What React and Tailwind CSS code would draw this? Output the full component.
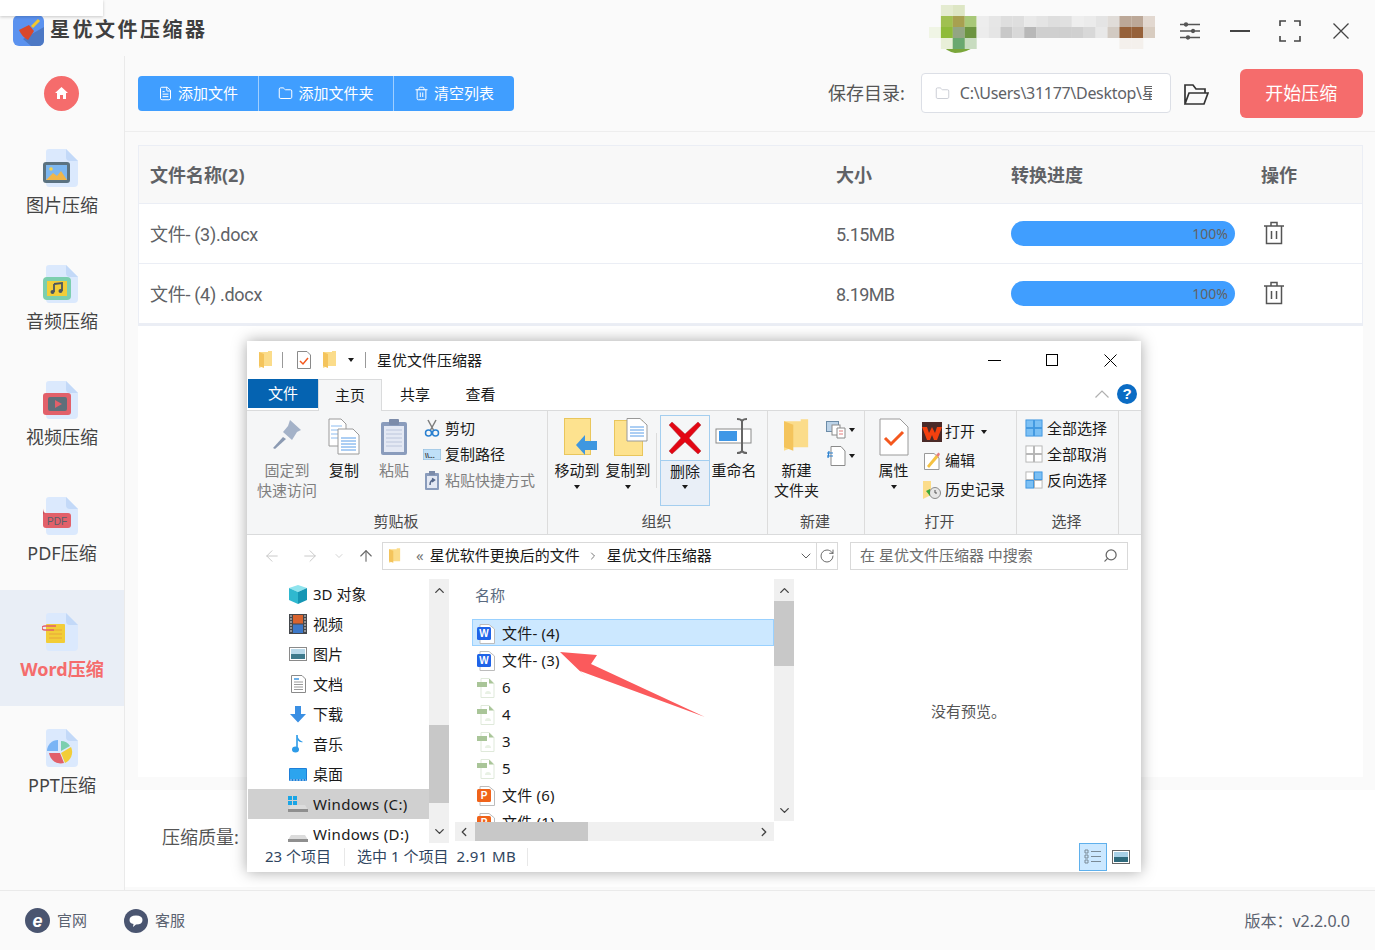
import { FileText, Folder, Trash2, ChevronLeft, ChevronRight, ChevronUp, ChevronDown, ArrowLeft, ArrowRight, ArrowUp, RotateCw, Search } from 'lucide-react'

const MOSAIC = [
  [null, '#e4ebd0', '#dde6c4', null, null, null, null, null, null, null, null, null, null, null, null, null, null, null, null, null],
  [null, '#a0c050', '#a8a050', '#a8c878', '#ededed', '#e6e6e6', '#dedede', '#dedede', '#e9e9e9', '#e4e4e4', '#dedede', '#e0e0e0', '#eeeeee', '#ebebeb', '#e4e4e4', '#e0dcd8', '#bca898', '#bca898', '#e2d8d0', null],
  ['#f0f5e5', '#8fbb3a', '#93a583', '#6c9440', '#ececec', '#e5e5e5', '#c8c8c8', '#d8d8d8', '#b8b8b8', '#cfcfcf', '#cfcfcf', '#cfcfcf', '#d0d0d0', '#d8d8d8', '#e8e8e8', '#d2cac2', '#96613a', '#96613a', '#d8ccc0', null],
  [null, '#e8efd8', '#6aa870', '#c8dcc0', null, null, null, null, null, null, null, null, null, null, null, null, '#f4f0ec', '#f4f0ec', null, null],
]

const NAV = [
  { label: '图片压缩', art: 'image' },
  { label: '音频压缩', art: 'audio' },
  { label: '视频压缩', art: 'video' },
  { label: 'PDF压缩', art: 'pdf' },
  { label: 'Word压缩', art: 'word', active: true },
  { label: 'PPT压缩', art: 'ppt' },
]

const TREE = [
  { label: '3D 对象', icon: 'cube' },
  { label: '视频', icon: 'film' },
  { label: '图片', icon: 'pic' },
  { label: '文档', icon: 'doc' },
  { label: '下载', icon: 'down' },
  { label: '音乐', icon: 'note' },
  { label: '桌面', icon: 'desk' },
  { label: 'Windows (C:)', icon: 'c', active: true, wide: true },
  { label: 'Windows (D:)', icon: 'd', wide: true },
]

const FILES = [
  { name: '文件- (4)', type: 'w', active: true },
  { name: '文件- (3)', type: 'w' },
  { name: '6', type: 'g' },
  { name: '4', type: 'g' },
  { name: '3', type: 'g' },
  { name: '5', type: 'g' },
  { name: '文件 (6)', type: 'p' },
  { name: '文件 (1)', type: 'p' },
]

function Logo() {
  return (
    <svg width="31" height="31" viewBox="0 0 31 31">
      <rect width="31" height="31" rx="6" fill="#5b92ef" />
      <path d="M31 12 L31 25 Q31 31 25 31 L18 31 L10 24 Z" fill="#4c78c4" />
      <path d="M19 12 L26 5" stroke="#f3c72e" strokeWidth="3" />
      <path d="M6 15 L16 10 L21 16 L15 25 Q9 22 6 15 Z" fill="#d9482b" />
    </svg>
  )
}

function Mosaic() {
  return (
    <svg width="226" height="48" viewBox="0 0 226 48">
      <path d="M12 33 L47 33 L47 40 Q38 48 26 48 Q16 46 12 38 Z" fill="#7aa63a" />
      {MOSAIC.map((row, r) =>
        row.map((c, i) => c && <rect key={`${r}-${i}`} x={i * 11.9} y={r * 11} width="12" height="11" fill={c} />)
      )}
    </svg>
  )
}

function NavArt({ art }) {
  return (
    <svg width="40" height="38" viewBox="0 0 40 38">
      <path d="M7 0 H24 L36 12 V34 Q36 38 32 38 H7 Q4 38 4 34 V3 Q4 0 7 0 Z" fill="#dbe9fd" />
      <path d="M24 0 L36 12 H28 Q24 12 24 8 Z" fill="#c3d9f8" />
      {art === 'image' && (
        <g>
          <rect x="1" y="13" width="27" height="21" rx="3" fill="#5b7280" />
          <rect x="4" y="16" width="21" height="15" fill="#7db7f0" />
          <path d="M4 31 L11 24 L15 27 L19 22 L25 31 Z" fill="#f0b64a" />
          <circle cx="9" cy="20" r="1.8" fill="#f7d34a" />
        </g>
      )}
      {art === 'audio' && (
        <g>
          <rect x="1" y="12" width="28" height="23" rx="4" fill="#7ccfae" />
          <rect x="5" y="16" width="20" height="15" fill="#f2cd38" />
          <path d="M12 19 L20 18 V26 M12 19 V27" stroke="#4a5660" strokeWidth="1.8" fill="none" />
          <circle cx="10.5" cy="27" r="2" fill="#4a5660" />
          <circle cx="18.5" cy="26" r="2" fill="#4a5660" />
        </g>
      )}
      {art === 'video' && (
        <g>
          <rect x="1" y="12" width="28" height="22" rx="3" fill="#e2606a" />
          <rect x="6" y="16" width="19" height="14" rx="2" fill="#5f6f7a" />
          <path d="M13 19 L20 23 L13 27 Z" fill="#e2606a" />
        </g>
      )}
      {art === 'pdf' && (
        <g>
          <path d="M1 11 Q1 16 4 16 V27 L1 25 Z" fill="#c94f5c" />
          <rect x="1" y="16" width="28" height="15" rx="3" fill="#e2606a" />
          <text x="15" y="27.5" textAnchor="middle" fontSize="10" fontWeight="500" fill="#5a5f6a" fontFamily="Liberation Sans, sans-serif">PDF</text>
        </g>
      )}
      {art === 'word' && (
        <g>
          <rect x="4" y="11" width="19" height="19" rx="1" fill="#f2cd38" />
          <path d="M7 17 H20 M7 21 H20 M7 25 H20" stroke="#e8a53a" strokeWidth="1" />
          <path d="M14 13 H3 Q0 13 0 15 Q0 17 3 17 H12" stroke="#e2606a" strokeWidth="1.3" fill="none" />
        </g>
      )}
      {art === 'ppt' && (
        <g>
          <path d="M17 12 V23 H6 A11 11 0 0 1 17 12" fill="#7ab4f5" transform="translate(-1 -1)" />
          <path d="M19 12 A11 11 0 0 1 28 17 L19 22 Z" fill="#7ccfae" />
          <path d="M29 18 A12 12 0 0 1 23 34 L19 24 Z" fill="#f2cd38" />
          <path d="M7 24 H18 L22 34 A12 12 0 0 1 7 24 Z" fill="#e2606a" />
        </g>
      )}
    </svg>
  )
}

function TrashIcon() {
  return (
    <svg width="22" height="24" viewBox="0 0 22 24" fill="none" stroke="#555" strokeWidth="1.5">
      <path d="M1 5 H21 M8 5 V1.500 H14 V5 M3.500 5 V22.500 H18.500 V5 M8.500 10 V18 M13.500 10 V18" />
    </svg>
  )
}

function ProgressRow({ name, size }) {
  return (
    <div className="flex h-[60px] items-center border-b border-[#ebeef5] pl-[11px] text-[18px] text-[#606266]">
      <div className="w-[686px] pt-[2px] font-['Roboto','Noto_Sans_CJK_SC',sans-serif] tracking-[-0.3px]">{name}</div>
      <div className="w-[175px] pt-[2px] font-['Roboto',sans-serif] tracking-[-0.6px]">{size}</div>
      <div className="w-[250px]">
        <div className="-mt-[1px] flex h-[25px] w-[224px] items-center justify-end rounded-full bg-[#409eff] pr-[7px] text-[14px]">100%</div>
      </div>
      <div className="-mt-[2px] ml-[2px]"><TrashIcon /></div>
    </div>
  )
}

function Yfolder({ w = 14, h = 18 }) {
  return (
    <svg width={w} height={h} viewBox="0 0 14 18">
      <path d="M0 1 L9 1 L9 0 L13 0 V15 H5 L0 17 Z" fill="#fbdc8a" />
      <path d="M0 1 L5 3 V17 L0 15 Z" fill="#f4c45c" />
    </svg>
  )
}

const BIG_ICONS = {
  pin: (
    <svg width="34" height="34" viewBox="0 0 34 34">
      <path d="M20 2 L31 12 L27 14 L22 22 L13 14 L18 8 Z" fill="#a4b2c8" />
      <path d="M13 19 L3 30 L5 31 L16 21 Z" fill="#8b9ab2" />
    </svg>
  ),
  copy: (
    <svg width="32" height="38" viewBox="0 0 32 38" fill="#fff" stroke="#9a9a9a">
      <path d="M1 1 H13 L18 6 V28 H1 Z" />
      <path d="M3 8 H14 M3 12 H14 M3 16 H14 M3 20 H10" stroke="#8dbcf0" />
      <path d="M10 11 H25 L31 17 V36 H10 Z" />
      <path d="M13 20 H28 M13 23 H28 M13 26 H28 M13 29 H28 M13 32 H28" stroke="#5b9ee8" />
    </svg>
  ),
  paste: (
    <svg width="28" height="38" viewBox="0 0 28 38">
      <rect x="1" y="4" width="26" height="33" rx="2" fill="#8a9cbc" />
      <rect x="4" y="8" width="20" height="26" fill="#e4e9f4" />
      <path d="M6 12 H22 M6 16 H22 M6 20 H22 M6 24 H22 M6 28 H22" stroke="#bcc6dc" />
      <rect x="9" y="1" width="10" height="6" rx="1" fill="#7c8caa" />
    </svg>
  ),
  move: (
    <svg className="ml-[6px]" width="33" height="38" viewBox="0 0 33 38">
      <rect x=".5" y=".5" width="26" height="36" fill="#fde28f" stroke="#e9c65c" />
      <path d="M12 27 L21 17 V23 H33 V32 H21 V37 Z" fill="#3f97e0" />
    </svg>
  ),
  copyto: (
    <svg className="ml-[5px]" width="34" height="38" viewBox="0 0 34 38">
      <rect x=".5" y="2.500" width="28" height="35" fill="#fde28f" stroke="#e9c65c" />
      <path d="M13 .5 H26 L33 7 V23 H13 Z" fill="#fff" stroke="#999" />
      <path d="M16 9 H30 M16 12 H30 M16 15 H30 M16 18 H30" stroke="#5b9ee8" />
    </svg>
  ),
  del: (
    <svg width="34" height="34" viewBox="0 0 34 34">
      <path d="M4 1 L17 13 L30 1 L33 4 L21 17 L33 30 L30 33 L17 21 L4 33 L1 30 L13 17 L1 4 Z" fill="#e30613" stroke="#a8323a" strokeWidth="0.5" />
    </svg>
  ),
  rename: (
    <svg width="38" height="36" viewBox="0 0 38 36" fill="none">
      <rect x="1" y="11" width="35" height="14" fill="#fff" stroke="#8a8a8a" />
      <rect x="4" y="13" width="18" height="10" fill="#3f97e6" />
      <path d="M22 1 Q26 1 27 3 Q28 1 32 1 M27 3 V33 M22 35 Q26 35 27 33 Q28 35 32 35" stroke="#666" strokeWidth="2" />
    </svg>
  ),
  newdir: <Yfolder w={26} h={36} />,
  prop: (
    <svg width="30" height="38" viewBox="0 0 30 38">
      <path d="M1 1 H21 L29 9 V37 H1 Z" fill="#fff" stroke="#9a9a9a" />
      <path d="M6 20 L12 26 L24 14" stroke="#f4581e" strokeWidth="3" fill="none" />
    </svg>
  ),
}

function BigBtn({ w, icon, label, second, caret, dim, ml = 0 }) {
  return (
    <div
      className={`relative flex flex-col items-center ${dim ? 'text-[#7f7f7f]' : 'text-[#1a1a1a]'}`}
      style={{ width: w, marginLeft: ml }}
    >
      <div className="mt-[7px] flex h-[42px] items-start justify-center">{BIG_ICONS[icon]}</div>
      <div className="h-[20px] leading-[20px] whitespace-nowrap">{label}</div>
      {second && <div className="h-[20px] leading-[20px] whitespace-nowrap">{second}</div>}
      {caret && <div className="mt-[5px] h-0 w-0 border-x-[3.500px] border-t-[4px] border-x-transparent border-t-[#1a1a1a]" />}
    </div>
  )
}

function DeleteBtn() {
  return (
    <div className="mt-[4px] flex h-[91px] w-[50px] flex-col items-center border border-[#a4ceef] bg-[#e9eff7] text-[#1a1a1a]">
      <div className="flex h-[45px] w-full items-center justify-center border-b border-[#a4ceef] bg-[#f5f6f7]">{BIG_ICONS.del}</div>
      <div className="h-[20px] leading-[20px]">删除</div>
      <div className="mt-[4px] h-0 w-0 border-x-[3.500px] border-t-[4px] border-x-transparent border-t-[#1a1a1a]" />
    </div>
  )
}

function SmallRow({ icon, label, h = 26, dim, caret }) {
  return (
    <div className={`flex items-center gap-[3px] ${dim ? 'text-[#7f7f7f]' : 'text-[#1a1a1a]'}`} style={{ height: h }}>
      <div className="flex w-[20px] justify-center">{icon}</div>
      <span className="whitespace-nowrap">{label}</span>
      {caret && <div className="ml-[3px] h-0 w-0 border-x-[3.500px] border-t-[4px] border-x-transparent border-t-[#1a1a1a]" />}
    </div>
  )
}

function Group({ w, label, children }) {
  return (
    <div className="relative flex flex-col border-r border-[#dcdcdc]" style={{ width: w }}>
      <div className="flex h-[99px]">{children}</div>
      <div className="mt-[1px] pr-[2px] text-center leading-[20px] text-[#4a4a4a]">{label}</div>
    </div>
  )
}

function Grid4({ on = [0, 1, 2, 3] }) {
  const cells = [[1, 1], [10, 1], [1, 10], [10, 10]]
  return (
    <svg width="18" height="18" viewBox="0 0 19 19">
      {cells.map(([x, y], i) =>
        on.includes(i)
          ? <rect key={i} x={x} y={y} width="8" height="8" fill="#7cc0f4" stroke="#3f97e0" />
          : <rect key={i} x={x} y={y} width="8" height="8" fill="#fff" stroke="#b5b5b5" />
      )}
    </svg>
  )
}

function TreeIcon({ type }) {
  if (type === 'cube') return (
    <svg width="20" height="19" viewBox="0 0 20 19">
      <path d="M10 0 L19 3 L10 7 L1 3 Z" fill="#8fe4ee" />
      <path d="M1 3 L10 7 V19 L1 15 Z" fill="#2fb8cf" />
      <path d="M19 3 L10 7 V19 L19 15 Z" fill="#1596b4" />
    </svg>
  )
  if (type === 'film') return (
    <svg width="18" height="20" viewBox="0 0 18 20">
      <rect width="18" height="20" fill="#44474c" />
      <rect x="4" y="1" width="10" height="8.500" fill="#d8632e" />
      <rect x="4" y="10.500" width="10" height="8.500" fill="#3c78c8" />
      <path d="M1 2 H3 M1 5 H3 M1 8 H3 M1 11 H3 M1 14 H3 M1 17 H3 M15 2 H17 M15 5 H17 M15 8 H17 M15 11 H17 M15 14 H17 M15 17 H17" stroke="#dedede" />
    </svg>
  )
  if (type === 'pic') return (
    <svg width="18" height="14" viewBox="0 0 18 14">
      <rect x="0.500" y="0.500" width="17" height="13" fill="#fff" stroke="#8a8a8a" />
      <rect x="2" y="2" width="14" height="5" fill="#b9d9ea" />
      <rect x="2" y="7" width="14" height="5" fill="#3e7a8c" />
    </svg>
  )
  if (type === 'doc') return (
    <svg width="15" height="18" viewBox="0 0 15 18" fill="none">
      <path d="M.5 .5 H11 L14.500 4 V17.500 H.5 Z" fill="#fff" stroke="#8a8a8a" />
      <path d="M3 4 H8" stroke="#3f97e0" strokeWidth="1.500" />
      <path d="M3 7 H12 M3 9.500 H12 M3 12 H12 M3 14.500 H12" stroke="#9a9a9a" />
    </svg>
  )
  if (type === 'down') return (
    <svg width="18" height="17" viewBox="0 0 18 17">
      <path d="M6 0 H12 V8 H17 L9 16.500 L1 8 H6 Z" fill="#3a8fe3" />
    </svg>
  )
  if (type === 'note') return (
    <svg width="12" height="20" viewBox="0 0 12 20">
      <path d="M5 1 V15" stroke="#2d9be8" strokeWidth="1.600" />
      <ellipse cx="3.500" cy="15.500" rx="3.500" ry="3" fill="#2d9be8" />
      <path d="M5 1 Q6 6 11 8 Q8 9 5.500 6 Z" fill="#2d9be8" />
    </svg>
  )
  if (type === 'desk') return (
    <svg width="18" height="13" viewBox="0 0 18 13">
      <rect width="18" height="13" rx="1" fill="#1e7fd8" />
      <rect x="1" y="1" width="16" height="10" fill="#2ca4ee" />
      <path d="M1 12 H17" stroke="#bfe0f6" strokeDasharray="2 1" />
    </svg>
  )
  return (
    <svg width="20" height="16" viewBox="0 0 20 16">
      <path d="M3 9 L17 9 L20 14 H0 Z" fill="#dcdcdc" />
      <rect x="0" y="13" width="20" height="3" fill="#8f8f8f" />
      {type === 'c' && (
        <g fill="#19a5e6">
          <rect x="0" y="0" width="4" height="4" />
          <rect x="5" y="0" width="4" height="4" />
          <rect x="0" y="5" width="4" height="4" />
          <rect x="5" y="5" width="4" height="4" />
        </g>
      )}
    </svg>
  )
}

function FileIcon({ type }) {
  if (type === 'g') return (
    <svg width="18" height="20" viewBox="0 0 18 20">
      <path d="M4 .5 H12 L17 5.500 V19.500 H4 Z" fill="#fff" stroke="#dfe9da" />
      <path d="M12 .5 L17 5.500 H12 Z" fill="#a9c598" />
      <rect x="0" y="4" width="10" height="5" fill="#a9c598" />
      <path d="M8 16 Q8 13 11 13 Q14 13 14 16 Z" fill="#e8f1e4" />
    </svg>
  )
  const color = type === 'w' ? '#1f63e8' : '#f0631a'
  return (
    <svg width="18" height="20" viewBox="0 0 18 20">
      <path d="M3 .5 H12 L17.500 5 V19.500 H3 Z" fill="#fff" stroke="#bcbcbc" />
      <rect x="0" y="3" width="14" height="13" rx="1.500" fill={color} />
      <text x="7" y="13" textAnchor="middle" fontSize="10" fontWeight="700" fill="#fff" fontFamily="Liberation Sans, sans-serif">{type === 'w' ? 'W' : 'P'}</text>
    </svg>
  )
}

function Explorer() {
  return (
    <div className="absolute left-[247px] top-[341px] flex h-[531px] w-[894px] flex-col bg-white font-['Noto_Sans','Noto_Sans_CJK_SC',sans-serif] text-[15px] text-[#1a1a1a] shadow-[0_0_14px_rgba(0,0,0,0.35)]">
      {/* title */}
      <div className="flex h-[38px] shrink-0 items-center pl-[12px]">
        <Yfolder />
        <div className="ml-[9px] h-[16px] w-px bg-[#999]" />
        <svg className="ml-[14px]" width="14" height="18" viewBox="0 0 14 18">
          <path d="M.5 .5 H10 L13.500 4 V17.500 H.5 Z" fill="#fff" stroke="#8a8a8a" />
          <path d="M3 10 L6 13 L11 7" stroke="#f4581e" strokeWidth="1.500" fill="none" />
        </svg>
        <div className="ml-[12px]"><Yfolder /></div>
        <div className="ml-[11px] h-0 w-0 border-x-[3.500px] border-t-[4px] border-x-transparent border-t-[#1a1a1a]" />
        <div className="ml-[11px] h-[16px] w-px bg-[#999]" />
        <span className="ml-[11px]">星优文件压缩器</span>
        <div className="ml-auto flex items-center">
          <div className="h-px w-[13px] bg-black" />
          <div className="ml-[45px] h-[12px] w-[12px] border border-black" />
          <svg className="ml-[46px] mr-[24px]" width="13" height="13" viewBox="0 0 13 13" stroke="#000" strokeWidth="1">
            <path d="M.5 .5 L12.500 12.500 M12.500 .5 L.5 12.500" />
          </svg>
        </div>
      </div>
      {/* tabs */}
      <div className="relative flex h-[32px] shrink-0 border-b border-[#dadbdc]">
        <div className="ml-px flex h-[29px] w-[70px] items-center justify-center bg-[#0563b1] text-white">文件</div>
        <div className="-mb-px flex h-[32px] w-[64px] items-center justify-center border-x border-t border-[#dadbdc] bg-[#f5f6f7]">主页</div>
        <div className="flex h-[31px] w-[66px] items-center justify-center">共享</div>
        <div className="flex h-[31px] w-[65px] items-center justify-center">查看</div>
        <div className="ml-auto mr-[4px] flex items-center gap-[8px] pb-[1px]">
          <svg width="14" height="8" viewBox="0 0 14 8" fill="none" stroke="#b0b0b0" strokeWidth="1.200">
            <path d="M.5 7.500 L7 1 L13.500 7.500" />
          </svg>
          <div className="flex h-[20px] w-[20px] items-center justify-center rounded-full bg-[#0b6cc4] font-['Liberation_Sans',sans-serif] text-[15px] font-bold text-white">?</div>
        </div>
      </div>
      {/* ribbon */}
      <div className="flex h-[124px] shrink-0 border-b border-[#dadbdc] bg-[#f5f6f7]">
        <Group w={301} label="剪贴板">
          <BigBtn w={64} ml={8} icon="pin" label="固定到" second="快速访问" dim />
          <BigBtn w={50} icon="copy" label="复制" />
          <BigBtn w={50} icon="paste" label="粘贴" dim />
          <div className="ml-[3px] pt-[4px]">
            <SmallRow
              label="剪切"
              icon={
                <svg width="16" height="18" viewBox="0 0 16 18" fill="none">
                  <path d="M4 1 L10 12 M12 1 L6 12" stroke="#7d7d7d" strokeWidth="1.500" />
                  <circle cx="4.500" cy="14" r="3" stroke="#2a80d0" strokeWidth="1.500" />
                  <circle cx="11.500" cy="14" r="3" stroke="#2a80d0" strokeWidth="1.500" />
                </svg>
              }
            />
            <SmallRow
              label="复制路径"
              icon={
                <svg width="18" height="11" viewBox="0 0 18 11">
                  <rect width="18" height="11" fill="#bfe0f8" stroke="#8fb8d8" />
                  <text x="2" y="8.500" fontSize="7" fontWeight="700" fill="#333" fontFamily="Liberation Sans, sans-serif">\\...</text>
                </svg>
              }
            />
            <SmallRow
              label="粘贴快捷方式"
              dim
              icon={
                <svg width="14" height="19" viewBox="0 0 14 19">
                  <rect y="2" width="14" height="17" rx="1" fill="#8a9cbc" />
                  <rect x="2" y="5" width="10" height="12" fill="#e4e9f4" />
                  <rect x="4" y="0" width="6" height="4" fill="#7c8caa" />
                  <path d="M5 14 Q5 9 9 9 M7 7.500 L9.500 9 L7 11" stroke="#56698c" strokeWidth="1.500" fill="none" />
                </svg>
              }
            />
          </div>
        </Group>
        <Group w={220} label="组织">
          <BigBtn w={50} ml={4} icon="move" label="移动到" caret />
          <BigBtn w={50} ml={1} icon="copyto" label="复制到" caret />
          <div className="ml-[3px] mr-[3px] mt-[22px] h-[55px] w-px bg-[#dcdcdc]" />
          <DeleteBtn />
          <BigBtn w={48} icon="rename" label="重命名" />
        </Group>
        <Group w={97} label="新建">
          <BigBtn w={57} icon="newdir" label="新建" second="文件夹" />
          <div className="ml-px pt-[6px]">
            <div className="flex h-[26px] items-center gap-[3px]">
              <svg width="20" height="18" viewBox="0 0 20 18">
                <rect x=".5" y=".5" width="12" height="10" fill="#bcd3e8" stroke="#6c8ca8" />
                <rect x="6" y="4" width="8" height="10" fill="#fff" stroke="#8a8a8a" />
                <path d="M11 7 H19 V17 H11 Z" fill="#fff" stroke="#8a8a8a" />
                <path d="M13 10 H17 M13 13 H17" stroke="#e27a7a" />
              </svg>
              <div className="h-0 w-0 border-x-[3.500px] border-t-[4px] border-x-transparent border-t-[#1a1a1a]" />
            </div>
            <div className="flex h-[26px] items-center gap-[3px]">
              <svg width="20" height="20" viewBox="0 0 20 20">
                <path d="M5 .5 H15 L19 5 V19.500 H5 Z" fill="#fff" stroke="#8a8a8a" />
                <path d="M1 7 H7 M1 10 H7 M3 5 L2 12" stroke="#2a80d0" strokeWidth="1.200" />
              </svg>
              <div className="h-0 w-0 border-x-[3.500px] border-t-[4px] border-x-transparent border-t-[#1a1a1a]" />
            </div>
          </div>
        </Group>
        <Group w={152} label="打开">
          <BigBtn w={57} icon="prop" label="属性" caret />
          <div className="pt-[6px]">
            <SmallRow
              h={29}
              label="打开"
              caret
              icon={
                <svg width="20" height="20" viewBox="0 0 20 20">
                  <rect width="20" height="20" fill="#4a2a28" />
                  <path d="M0 5 H5 L7 11 L10 5 L13 11 L15 5 H20 L15 18 H12 L10 13 L8 18 H5 Z" fill="#f4400f" />
                </svg>
              }
            />
            <SmallRow
              h={29}
              label="编辑"
              icon={
                <svg width="16" height="18" viewBox="0 0 16 18">
                  <path d="M.5 1.500 H10 L15 6 V17.500 H.5 Z" fill="#fff" stroke="#9a9a9a" />
                  <path d="M3 14 L12 3 L14.500 5 L5 16 Z" fill="#f5c242" />
                  <path d="M12 3 L14.500 0.500 L16 2 L14.500 5 Z" fill="#e87a7a" />
                </svg>
              }
            />
            <SmallRow
              h={29}
              label="历史记录"
              icon={
                <svg width="18" height="18" viewBox="0 0 18 18">
                  <path d="M0 0 H8 V14 L0 18 Z" fill="#fbdc8a" />
                  <circle cx="12" cy="12" r="5.500" fill="#e6e6e6" stroke="#8a8a8a" />
                  <path d="M12 9 V12 H14" stroke="#555" fill="none" />
                  <path d="M3 10 L7 8 V15 Z" fill="#3aa83a" />
                </svg>
              }
            />
          </div>
        </Group>
        <Group w={102} label="选择">
          <div className="ml-[7px] pt-[4px]">
            <SmallRow label="全部选择" icon={<Grid4 />} />
            <SmallRow label="全部取消" icon={<Grid4 on={[]} />} />
            <SmallRow label="反向选择" icon={<Grid4 on={[1, 2]} />} />
          </div>
        </Group>
      </div>
      {/* address */}
      <div className="flex h-[44px] shrink-0 items-center pb-[3px]">
        <ArrowLeft className="ml-[16px]" size={18} strokeWidth={1.2} color="#c4c4c4" />
        <ArrowRight className="ml-[20px]" size={18} strokeWidth={1.2} color="#c4c4c4" />
        <ChevronDown className="ml-[14px]" size={12} strokeWidth={1.5} color="#c4c4c4" />
        <ArrowUp className="ml-[12px]" size={18} strokeWidth={1.5} color="#6a6a6a" />
        <div className="ml-[7px] flex h-[28px] w-[456px] items-center border border-[#d9d9d9]">
          <div className="ml-[6px]"><Yfolder w={12} h={16} /></div>
          <span className="ml-[15px] text-[#777]">«</span>
          <span className="ml-[6px]">星优软件更换后的文件</span>
          <ChevronRight className="ml-[7px]" size={12} strokeWidth={1.6} color="#555" />
          <span className="ml-[8px]">星优文件压缩器</span>
          <ChevronDown className="ml-auto" size={16} strokeWidth={1.3} color="#444" />
          <div className="ml-[2px] h-[26px] w-px bg-[#d9d9d9]" />
          <RotateCw className="mx-[2px]" size={16} strokeWidth={1.3} color="#555" />
        </div>
        <div className="ml-[12px] flex h-[28px] w-[278px] items-center justify-between border border-[#d9d9d9] px-[9px] text-[#6d6d6d]">
          <span>在 星优文件压缩器 中搜索</span>
          <Search size={15} strokeWidth={2} color="#666" className="-scale-x-100" />
        </div>
      </div>
      {/* content */}
      <div className="relative flex h-[264px] shrink-0">
        <div className="flex w-[182px] flex-col overflow-hidden pl-px">
          {TREE.map((t) => (
            <div key={t.label} className={`flex h-[30px] shrink-0 items-center ${t.active ? 'bg-[#d0d0d0]' : ''}`}>
              <div className="ml-[39px] flex w-[22px] justify-center"><TreeIcon type={t.icon} /></div>
              <span className={`ml-[4px] ${t.wide ? 'tracking-[0.35px]' : ''}`}>{t.label}</span>
            </div>
          ))}
        </div>
        <div className="flex w-[20px] flex-col items-center bg-[#f0f0f0] pt-[4px]">
          <ChevronUp size={15} strokeWidth={2.2} color="#444" />
          <div className="mt-[127px] h-[78px] w-full bg-[#c8c8c8]" />
          <ChevronDown className="mt-[21px]" size={15} strokeWidth={2.2} color="#444" />
        </div>
        <div className="relative ml-[6px] flex w-[319px] flex-col">
          <div className="h-[40px] pl-[20px] pt-[5px] text-[#5a6a80]">名称</div>
          <div className="flex h-[203px] flex-col overflow-hidden pl-[17px]">
            {FILES.map((f) => (
              <div key={f.name} className={`flex h-[27px] shrink-0 items-center border pl-[4px] pt-[2px] ${f.active ? 'border-[#99d1ff] bg-[#cce8ff]' : 'border-transparent'}`}>
                <FileIcon type={f.type} />
                <span className="ml-[7px] tracking-[0.2px]">{f.name}</span>
              </div>
            ))}
          </div>
          <div className="flex h-[19px] items-center bg-[#f0f0f0]">
            <ChevronLeft size={14} strokeWidth={2.2} color="#444" className="ml-[2px]" />
            <div className="ml-[4px] h-full w-[113px] bg-[#c8c8c8]" />
            <ChevronRight size={14} strokeWidth={2.2} color="#444" className="ml-auto mr-[3px]" />
          </div>
        </div>
        <div className="flex h-[242px] w-[20px] flex-col items-center bg-[#f0f0f0] pt-[4px]">
          <ChevronUp size={15} strokeWidth={2.2} color="#444" />
          <div className="mt-[3px] h-[65px] w-full bg-[#c8c8c8]" />
          <ChevronDown className="mt-[137px]" size={15} strokeWidth={2.2} color="#444" />
        </div>
        <div className="flex flex-1 items-center justify-center pl-[2px] text-[15px] text-[#555]">没有预览。</div>
      </div>
      {/* status */}
      <div className="flex min-h-0 flex-1 items-center pb-[2px] text-[15px] text-[#2f4560]">
        <span className="ml-[18px]">23 个项目</span>
        <div className="ml-[13px] h-[18px] w-px bg-[#e8e8e8]" />
        <span className="ml-[12px]">选中 1 个项目</span>
        <span className="ml-[8px] tracking-[0.4px]">2.91 MB</span>
        <div className="ml-[11px] h-[18px] w-px bg-[#e8e8e8]" />
        <div className="ml-auto flex h-[28px] w-[28px] items-center justify-center border border-[#5fb0ec] bg-[#cce8ff]">
          <svg width="18" height="16" viewBox="0 0 18 16" fill="none" stroke="#7a8a96">
            <path d="M1 1 H4 V4 H1 Z M1 6 H4 V9 H1 Z M1 11 H4 V14 H1 Z M7 2.500 H17 M7 7.500 H17 M7 12.500 H17" />
          </svg>
        </div>
        <div className="ml-[5px] mr-[11px] flex w-[18px] items-center justify-center">
          <svg width="18" height="14" viewBox="0 0 18 14">
            <rect x=".5" y=".5" width="17" height="13" fill="#fff" stroke="#666" />
            <rect x="2" y="2" width="14" height="5" fill="#a8d0e6" />
            <rect x="2" y="7" width="14" height="5" fill="#2f6a7c" />
          </svg>
        </div>
      </div>
      {/* annotation arrow */}
      <svg className="absolute left-0 top-0" width="894" height="531" viewBox="0 0 894 531">
        <path d="M313 311 L350 314 L344 323 L458 376 L333 330 L339 336 Z" fill="#fb5a5c" />
      </svg>
    </div>
  )
}

export default function App() {
  return (
    <div className="relative flex h-[950px] w-[1375px] flex-col overflow-hidden bg-[#fafafa] font-['Noto_Sans','Noto_Sans_CJK_SC',sans-serif]">
      {/* stray window corner, top left */}
      <div className="absolute left-0 top-0 h-[16px] w-[103px] bg-white shadow-[0_1px_3px_rgba(0,0,0,0.2)]" />
      {/* title bar */}
      <div className="flex h-[56px] items-start">
        <div className="ml-[13px] mt-[15px]"><Logo /></div>
        <div className="ml-[6px] mt-[15px] text-[20px] font-bold leading-[30px] tracking-[2.500px] text-[#3f3f3f]">星优文件压缩器</div>
        <div className="ml-[721px] mt-[5px]"><Mosaic /></div>
        <div className="ml-[25px] mt-[20px] flex items-center">
          <svg width="20" height="20" viewBox="0 0 20 20" fill="none" stroke="#555" strokeWidth="1.300">
            <path d="M0 3.500 H20 M0 10 H20 M0 16.500 H20" />
            <circle cx="6" cy="3.500" r="1.500" fill="#555" />
            <circle cx="13" cy="10" r="1.500" fill="#555" />
            <circle cx="8" cy="16.500" r="1.500" fill="#555" />
          </svg>
          <div className="ml-[30px] h-[1.500px] w-[20px] bg-[#444]" />
          <svg className="ml-[29px]" width="22" height="22" viewBox="0 0 22 22" fill="none" stroke="#444" strokeWidth="1.600">
            <path d="M1 6 V1 H7 M15 1 H21 V6 M21 16 V21 H15 M7 21 H1 V16" />
          </svg>
          <svg className="ml-[32px]" width="16" height="16" viewBox="0 0 16 16" fill="none" stroke="#444" strokeWidth="1.300">
            <path d="M.5 .5 L15.500 15.500 M15.500 .5 L.5 15.500" />
          </svg>
        </div>
      </div>
      <div className="flex h-[834px]">
        {/* sidebar */}
        <div className="w-[125px] shrink-0 border-r border-[#eaeaea]">
          <div className="flex h-[70px] items-start justify-center pr-px pt-[20px]">
            <div className="flex h-[35px] w-[35px] items-center justify-center rounded-full bg-[#f56c6c]">
              <svg width="13" height="13" viewBox="0 0 13 13">
                <path d="M6.500 0 L13 6 H11 V12 H8 V8 H5 V12 H2 V6 H0 Z" fill="#fff" />
              </svg>
            </div>
          </div>
          {NAV.map((n) => (
            <div key={n.label} className={`flex h-[116px] flex-col items-center pt-[23px] ${n.active ? 'bg-[#e9eef6]' : ''}`}>
              <NavArt art={n.art} />
              <div className={`mt-[5px] text-[18px] leading-[27px] ${n.active ? 'font-bold text-[#f56c6c]' : 'text-[#444]'}`}>{n.label}</div>
            </div>
          ))}
        </div>
        {/* main */}
        <div className="flex flex-1 flex-col">
          <div className="flex h-[76px] shrink-0 items-start border-b border-[#eeeeee]">
            <div className="ml-[13px] mt-[20px] flex h-[35px] w-[376px] items-center rounded-[4px] bg-[#409eff] text-[15px] text-white">
              <div className="flex h-full w-[121px] items-center justify-center gap-[5px] border-r border-[#a0cfff]"><FileText size={15} strokeWidth={1.6} />添加文件</div>
              <div className="flex h-full w-[135px] items-center justify-center gap-[5px] border-r border-[#a0cfff]"><Folder size={15} strokeWidth={1.6} />添加文件夹</div>
              <div className="flex h-full flex-1 items-center justify-center gap-[5px]"><Trash2 size={15} strokeWidth={1.6} />清空列表</div>
            </div>
            <div className="ml-[314px] mt-[24px] text-[18px] leading-[27px] text-[#555]">保存目录:</div>
            <div className="ml-[16px] mt-[17px] flex h-[40px] w-[250px] items-center rounded-[4px] border border-[#dcdfe6] bg-white text-[16px] text-[#606266]">
              <Folder className="ml-[13px]" size={15} strokeWidth={1.3} color="#c0c4cc" />
              <span className="ml-[10px] w-[192px] overflow-hidden whitespace-nowrap tracking-[-0.3px]">C:\Users\31177\Desktop\星优文件压缩器</span>
            </div>
            <svg className="ml-[13px] mt-[27px]" width="25" height="23" viewBox="0 0 25 23" fill="none" stroke="#333" strokeWidth="1.700">
              <path d="M1 21 V2 H9 L12 6 H21 V10 M1 21 L5 10 H24 L20 21 Z" />
            </svg>
            <div className="ml-[31px] mt-[13px] flex h-[49px] w-[123px] items-center justify-center rounded-[6px] bg-[#f56c6c] text-[18px] text-white">开始压缩</div>
          </div>
          <div className="ml-[13px] mr-[12px] mt-[13px] h-[632px] bg-white">
            <div className="border-x border-t border-[#ebeef5]">
              <div className="flex h-[58px] items-center border-b border-[#ebeef5] bg-[#f8f8f8] pl-[11px] pt-[2px] text-[18px] font-bold text-[#606266]">
                <div className="w-[686px]">文件名称(2)</div>
                <div className="w-[175px]">大小</div>
                <div className="w-[250px]">转换进度</div>
                <div>操作</div>
              </div>
              <ProgressRow name="文件- (3).docx" size="5.15MB" />
              <ProgressRow name="文件- (4) .docx" size="8.19MB" />
            </div>
            <div className="h-[2px] bg-[#ebeef5]" />
          </div>
          <div className="mt-[13px] flex h-[97px] items-center bg-white pl-[37px] text-[18px] text-[#555]">
            <span className="-mt-[2px]">压缩质量:</span>
          </div>
        </div>
      </div>
      {/* footer */}
      <div className="flex flex-1 items-center border-t border-[#eaeaea] text-[15px] text-[#5a6270]">
        <svg className="ml-[25px]" width="25" height="25" viewBox="0 0 25 25">
          <circle cx="12.500" cy="12.500" r="12.500" fill="#4a5570" />
          <text x="12.500" y="18.500" textAnchor="middle" fontSize="18" fontStyle="italic" fontWeight="700" fill="#fff" fontFamily="Liberation Sans, sans-serif">e</text>
        </svg>
        <span className="ml-[7px]">官网</span>
        <svg className="ml-[37px]" width="24" height="24" viewBox="0 0 24 24">
          <circle cx="12" cy="12" r="12" fill="#4a5570" />
          <path d="M5.500 11 Q5.500 6.500 12 6.500 Q18.500 6.500 18.500 11 Q18.500 15.500 12 15.500 L9 18 L9.500 15 Q5.500 14.500 5.500 11 Z" fill="#fff" />
        </svg>
        <span className="ml-[7px]">客服</span>
        <span className="ml-auto mr-[25px] text-[16px]">版本：v2.2.0.0</span>
      </div>
      <Explorer />
    </div>
  )
}
